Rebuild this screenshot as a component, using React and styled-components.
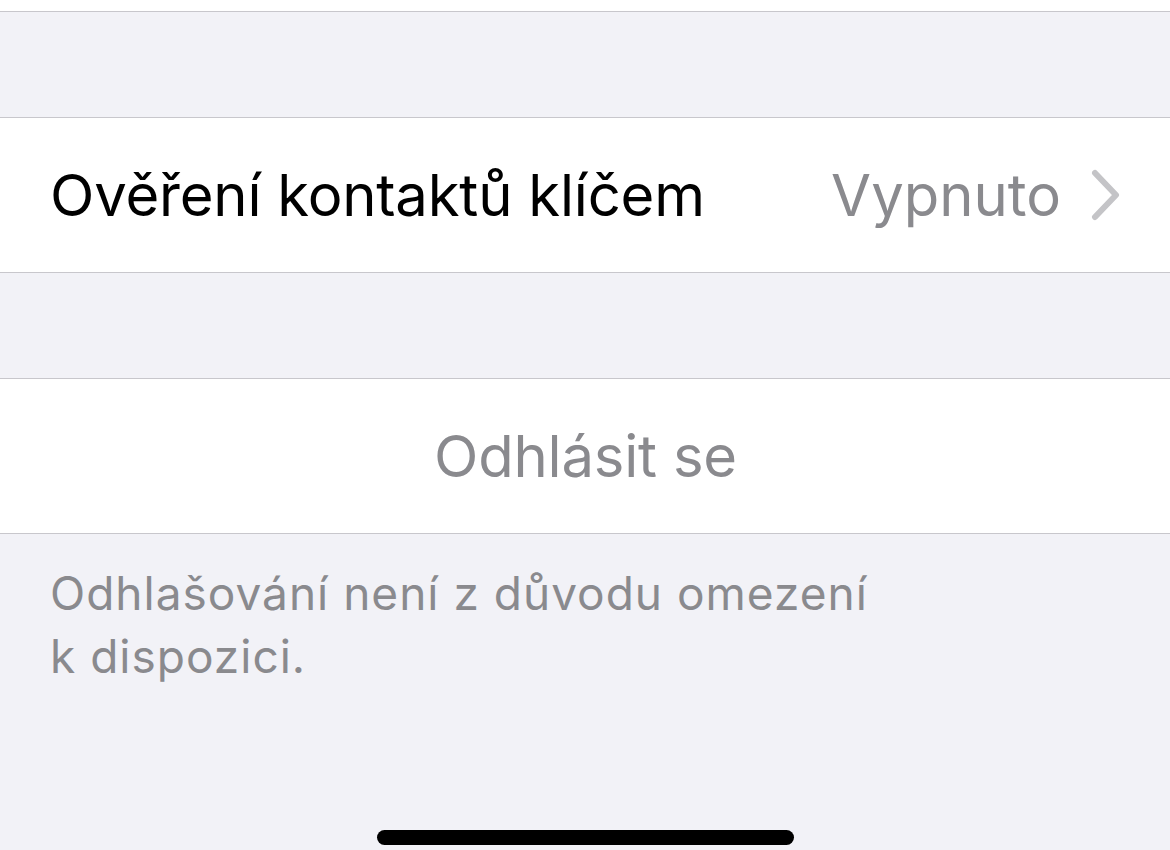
import React from 'react';
import styled, { createGlobalStyle } from 'styled-components';

const GlobalStyle = createGlobalStyle`
    html, body {
        margin: 0;
        padding: 0;
        background: #f2f2f7;
    }
    body {
        font-family: Inter, "Noto Sans", "Liberation Sans", sans-serif;
        -webkit-font-smoothing: antialiased;
    }
`

const Page = styled.div`
    width: 1170px;
    height: 850px;
    background: #f2f2f7;
    display: flex;
    flex-direction: column;
    overflow: hidden;
`

const TopStrip = styled.div`
    height: 11px;
    background: #ffffff;
    border-bottom: 1px solid #c8c7cc;
`

const Gap = styled.div`
    height: 105px;
`

const Group = styled.div`
    background: #ffffff;
    border-top: 1px solid #c8c7cc;
    border-bottom: 1px solid #c8c7cc;
`

const Row = styled.div`
    height: 154px;
    padding: 0 49px 0 50px;
    display: flex;
    align-items: center;
    justify-content: ${p => (p.center ? 'center' : 'space-between')};
`

const Label = styled.span`
    font-size: 58px;
    color: ${p => p.muted ? '#8a8a8e' : '#000000'};
    letter-spacing: -0.2px;
`

const Value = styled.div`
    display: flex;
    align-items: center;
    gap: 30px;
    font-size: 58px;
    color: #8a8a8e;
    letter-spacing: 0px;
`

const Footer = styled.p`
    margin: 0;
    padding: 28px 50px 0;
    font-size: 46px;
    line-height: 63px;
    color: #8a8a8e;
    letter-spacing: 1px;
`

const HomeBar = styled.div`
    margin: auto auto 5px;
    width: 417px;
    height: 15px;
    border-radius: 8px;
    background: #000000;
`

const Chevron = () => (
    <svg width="30" height="52" viewBox="0 0 30 52" fill="none">
        <path d="M4 4 L25 26 L4 48" stroke="#c4c4c7" strokeWidth="6" strokeLinecap="round" strokeLinejoin="round" />
    </svg>
)

const App = () => {
    return (
        <Page>
            <GlobalStyle />
            <TopStrip />
            <Gap />
            <Group>
                <Row>
                    <Label>Ověření kontaktů klíčem</Label>
                    <Value>
                        Vypnuto
                        <Chevron />
                    </Value>
                </Row>
            </Group>
            <Gap />
            <Group>
                <Row center>
                    <Label muted>Odhlásit se</Label>
                </Row>
            </Group>
            <Footer>
                Odhlašování není z důvodu omezení<br />
                k dispozici.
            </Footer>
            <HomeBar />
        </Page>
    );
}

export default App;
